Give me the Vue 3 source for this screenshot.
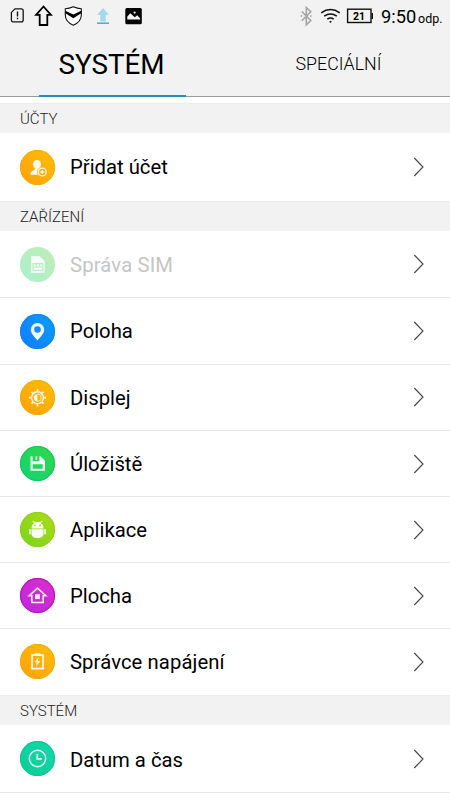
<script setup>
const groups = [
  { title: 'ÚČTY', rows: [{ id: 'account', label: 'Přidat účet' }] },
  {
    title: 'ZAŘÍZENÍ',
    rows: [
      { id: 'sim', label: 'Správa SIM', off: true },
      { id: 'location', label: 'Poloha' },
      { id: 'display', label: 'Displej' },
      { id: 'storage', label: 'Úložiště' },
      { id: 'apps', label: 'Aplikace' },
      { id: 'home', label: 'Plocha' },
      { id: 'power', label: 'Správce napájení' },
    ],
  },
  { title: 'SYSTÉM', rows: [{ id: 'clock', label: 'Datum a čas' }] },
]
</script>

<template>
  <div class="screen">
    <header class="top">
      <div class="status">
        <svg class="left-icons" width="150" height="34" viewBox="0 0 150 34">
          <path d="M15 8.800h6.300q1.900 0 1.900 1.900v9.300q0 1.900-1.900 1.900h-8.200q-1.700 0-1.700-1.900v-7.600z" fill="none" stroke="#151515" stroke-width="1.300" />
          <path d="M17.500 11.500v5M17.500 17.800v1.500" stroke="#151515" stroke-width="1.400" />
          <path d="M43.500 6.500l7.400 8.300h-3.600v10.200h-7.600V14.800h-3.600z" fill="none" stroke="#000" stroke-width="1.800" />
          <path d="M73.300 6.800q4 1.800 8 1.900v6.300q0 6.800-8 10.200q-8-3.400-8-10.200V8.700q4-.1 8-1.900z" fill="#fff" stroke="#111" stroke-width="1.100" />
          <path d="M65.300 10.800l8 3.700 8-3.700v2.500l-8 5-8-5z" fill="#000" />
          <path d="M103 8l6 7h-3.300v6.500h-5.400V15H97z" fill="#a5d8ef" />
          <path d="M97 23.200h12" stroke="#45aad4" stroke-width="1.500" />
          <rect x="125.300" y="8" width="16.500" height="16.300" rx="1.500" fill="#000" />
          <path d="M127.300 19.500v-3l3-3.300 4.500 4 2.400-2 3 3.300v1z" fill="#f2f2f2" />
          <circle cx="134.600" cy="12.600" r="1.100" fill="#f2f2f2" />
        </svg>
        <div class="right">
          <svg width="86" height="34" viewBox="294 0 86 34">
            <path d="M301.800 11.500l9 9-4.500 4.300V7.500l4.500 4.300-9 9" fill="none" stroke="#a5a5a5" stroke-width="1.600" />
            <circle cx="301.400" cy="16" r=".9" fill="#aaa" /><circle cx="310.900" cy="16" r=".9" fill="#aaa" />
            <path d="M321.200 12.800q9.300-6.500 18.600 0M324.200 16.200q6.300-4.600 12.600 0M327.300 19.200q3.200-2.200 6.400 0" fill="none" stroke="#111" stroke-width="1.500" />
            <circle cx="330.500" cy="21.800" r="1" fill="#111" />
            <rect x="347.600" y="9.200" width="23.400" height="13.300" fill="none" stroke="#111" stroke-width="1.400" />
            <rect x="371.500" y="13" width="1.500" height="6" fill="#111" />
            <text class="charge" x="359" y="19.700" text-anchor="middle">21</text>
          </svg>
          <span class="time">9:50</span><span class="odp">odp.</span>
        </div>
      </div>
      <nav class="tabs">
        <div class="tab active"><span>SYSTÉM</span></div>
        <div class="tab"><span>SPECIÁLNÍ</span></div>
      </nav>
    </header>

    <section v-for="group in groups" :key="group.title">
      <h2>{{ group.title }}</h2>
      <div v-for="row in group.rows" :key="row.id" class="row" :class="[row.id, { off: row.off }]">
        <div class="badge">
          <svg width="35" height="35" viewBox="0 0 35 35">
            <g v-if="row.id === 'account'">
              <path d="M17 10c2.700 0 4 1.900 4 4.300 0 2-.8 3.200-1.800 4v1.200l2 1-2 4.300H10.300c.2-3 1.600-4 4.500-5v-1.500c-1-.8-1.700-2-1.700-4 0-2.400 1.300-4.300 3.900-4.300z" class="solid" />
              <circle cx="22.300" cy="22" r="5.200" fill="#ffad0a" />
              <circle cx="22.300" cy="22" r="3.900" class="line" />
              <path d="M22.300 20v4M20.300 22h4" class="line" />
            </g>
            <g v-else-if="row.id === 'sim'">
              <path d="M11 9.300h8.800l4.900 4.800v11.700H11z" class="solid" />
              <path d="M13 16.700h9.700v6.600H13zM13 20h9.700M16.200 16.700V20M19.500 16.700V20" fill="none" stroke="#b5efc2" stroke-width="1.200" />
            </g>
            <path v-else-if="row.id === 'location'" fill-rule="evenodd" d="M17.500 9a6.700 6.700 0 0 1 6.700 6.700c0 4-3.600 6.700-6.700 10.800-3.100-4.100-6.700-6.800-6.700-10.800A6.700 6.700 0 0 1 17.500 9zm0 3.200a3.300 3.300 0 1 0 0 6.600 3.300 3.300 0 0 0 0-6.600z" class="solid" />
            <g v-else-if="row.id === 'display'">
              <circle cx="17.500" cy="17.700" r="5.900" class="line" />
              <path d="M17.500 14a3.700 3.700 0 0 0 0 7.400z" class="solid" />
              <path d="M17.500 14a3.700 3.700 0 0 1 0 7.400" class="line faint" />
              <path d="M17.500 9.200v2.200M17.500 24v2.200M9 17.700h2.200M23.800 17.700H26M11.600 11.800l1.400 1.400M22 22.200l1.400 1.400M11.600 23.600l1.400-1.400M22 13.200l1.400-1.400" class="line thick" />
            </g>
            <g v-else-if="row.id === 'storage'">
              <path fill-rule="evenodd" d="M10.500 10.300h2.100v4.900h6.800v-4.900h1.100l4.500 4.500v9.900H10.500zM12.700 18.300v4.400h10v-4.400z" class="solid" />
              <path d="M15.500 10.300h1.800v3.600h-1.800z" class="solid" />
            </g>
            <g v-else-if="row.id === 'apps'">
              <path d="M11.500 16.400c.1-2.600.9-4.200 2.800-5.300l-2-1.800.6-.6 2.300 1.600c1.400-.4 3.200-.4 4.600 0l2.300-1.600.6.600-2 1.800c1.900 1.100 2.700 2.700 2.800 5.300z" class="solid" />
              <path d="M11.500 17.300h12v5.200c-.4 1.600-2 3-3.800 3.400h-4.400c-1.800-.4-3.400-1.800-3.800-3.400zM9 17.200h1.800v5H9zM24.200 17.200H26v5h-1.800z" class="solid" />
              <path d="M14.300 12.800h1.400v1.400h-1.400zM19.300 12.800h1.400v1.400h-1.400z" fill="#91d719" />
            </g>
            <g v-else-if="row.id === 'home'">
              <path d="M9.300 17.700l8.200-7.500 8.200 7.500h-2.500v6.800H11.800v-6.800z" class="line home-line" />
              <path d="M15 16.200h4.900v4.900H15z" class="solid" />
            </g>
            <g v-else-if="row.id === 'power'">
              <path d="M14.600 9.300h5.800V11h-5.800z" class="solid" />
              <path d="M12 11.100h11v13.600H12z" class="line thick" />
              <path d="M18.700 13l-4 5.200h2.200l-.9 4.500 4.200-5.500h-2.300z" class="solid" />
            </g>
            <g v-else>
              <circle cx="17.500" cy="17.500" r="8.200" class="line" />
              <path d="M17.300 12.700v5.100h4.300" class="line thick" />
            </g>
          </svg>
        </div>
        <span class="label">{{ row.label }}</span>
        <svg class="chevron" width="12" height="20" viewBox="0 0 12 20"><path d="M1.300 1l8.700 9-8.700 9" /></svg>
      </div>
    </section>
  </div>
</template>

<style>
body { margin: 0; background: #fff; }
</style>

<style scoped>
.screen { width: 450px; height: 800px; overflow: hidden; background: #fff; color: #000; font-family: Roboto, "Noto Sans", sans-serif; }
.top { box-sizing: border-box; height: 103px; border-bottom: 6px solid #fff; background: #f2f2f2; }
.status { display: flex; justify-content: space-between; height: 34px; }
.right { display: flex; align-items: baseline; width: 156px; }
.right svg { flex: none; align-self: flex-start; }
.charge { font: 700 10.500px Roboto, sans-serif; }
.time { width: 37px; padding-left: 1px; line-height: 34px; font-size: 18.300px; white-space: nowrap; }
.odp { font-size: 12.500px; }
.tabs { display: flex; box-sizing: border-box; height: 63px; padding: 0 38px 0 39px; border-bottom: 1px solid #9b9b9b; }
.tab { display: flex; justify-content: center; width: 147px; height: 63px; box-sizing: border-box; line-height: 60px; font-size: 17.800px; color: #000; font-weight: 300; }
.tab.active { padding-right: 2px; line-height: 62px; border-bottom: 2px solid #238fb9; font-size: 27.800px; font-weight: 400; }
.tab:last-child { margin-left: 79px; }
h2 { box-sizing: border-box; height: 30px; margin: 0; padding-left: 20px; border-top: 1px solid #ececec; background: #f2f2f2; line-height: 30px; font-size: 15px; font-weight: 300; color: #222; }
.row { display: flex; align-items: center; box-sizing: border-box; height: 66px; padding: 0 25px 0 20px; border-bottom: 1px solid #e8e8e8; }
.row.account { height: 68px; border: 0; }
.row.sim, .row.location { height: 67px; }
.row.display { padding-bottom: 1px; }
.row.power { border-color: #fff; }
.row.clock { height: 68px; }
.badge { width: 35px; height: 35px; border-radius: 50%; }
.badge svg { display: block; }
.label { flex: 1; padding-top: 1px; margin-left: 15px; font-size: 20.250px; line-height: 30px; white-space: nowrap; }
.account .label, .location .label { padding-top: 0; padding-bottom: 1px; }
.clock .label { padding-top: 2px; }
.power .label { letter-spacing: .1px; }
.off .label { letter-spacing: .15px; color: #c5c5c5; }
.chevron path { fill: none; stroke: #444; stroke-width: 1.100; }
.solid { fill: #fff; fill-opacity: .93; }
.line { fill: none; stroke: #fff; stroke-opacity: .92; stroke-width: 1.400; }
.thick { stroke-width: 1.700; }
.faint { stroke-width: .8; }
.home-line { stroke-width: 1.600; }
.account .badge, .display .badge, .power .badge { background: linear-gradient(45deg, #ffa00b, #ffc006); box-shadow: inset 0 0 1px 1px #f9aa0b; }
.sim .badge { background: linear-gradient(45deg, #aaf0cc, #c0edb7); }
.location .badge { background: linear-gradient(45deg, #147bff, #089fff); box-shadow: inset 0 0 1px 1px #1286ed; }
.storage .badge { background: linear-gradient(45deg, #10d476, #35d746); box-shadow: inset 0 0 1px 1px #13c45f; }
.apps .badge { background: linear-gradient(45deg, #78d51d, #aedb16); box-shadow: inset 0 0 1px 1px #8ed01d; }
.home .badge { background: linear-gradient(45deg, #bd28df, #e02dcf); box-shadow: inset 0 0 1px 1px #b212b7; }
.clock .badge { background: linear-gradient(45deg, #0bcf92, #16d6ad); box-shadow: inset 0 0 1px 1px #0ac695; }
</style>
